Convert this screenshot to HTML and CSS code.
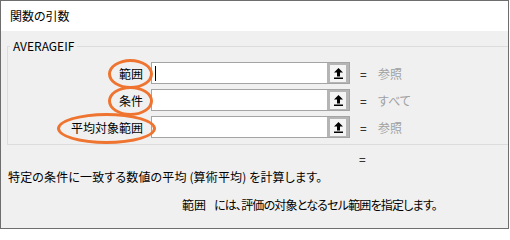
FILE: index.html
```html
<!DOCTYPE html>
<html lang="ja">
<head>
<meta charset="utf-8">
<title>関数の引数</title>
<link rel="stylesheet" href="styles.css">
</head>
<body>
<div class="dialog">
  <div class="titlebar">関数の引数</div>
  <div class="content">
    <fieldset class="group">
      <legend class="group-title">AVERAGEIF</legend>
      <div class="rows">
        <div class="row">
          <div class="label-cell"><span class="label mark mark-short">範囲</span></div>
          <div class="field">
            <div class="field-input"><span class="caret"></span></div>
            <div class="field-btn"><span class="btn-face"><svg class="ref-icon" width="9" height="11" viewBox="0 0 9 11"><path d="M4.5 0 L9 4.5 L6 4.5 L6 8.5 L3 8.5 L3 4.5 L0 4.5 Z" fill="#000"/><rect x="0" y="9.5" width="9" height="1.5" fill="#000"/></svg></span></div>
          </div>
          <span class="eq">=</span>
          <span class="value">参照</span>
        </div>
        <div class="row">
          <div class="label-cell"><span class="label mark mark-short">条件</span></div>
          <div class="field">
            <div class="field-input"></div>
            <div class="field-btn"><span class="btn-face"><svg class="ref-icon" width="9" height="11" viewBox="0 0 9 11"><path d="M4.5 0 L9 4.5 L6 4.5 L6 8.5 L3 8.5 L3 4.5 L0 4.5 Z" fill="#000"/><rect x="0" y="9.5" width="9" height="1.5" fill="#000"/></svg></span></div>
          </div>
          <span class="eq">=</span>
          <span class="value">すべて</span>
        </div>
        <div class="row">
          <div class="label-cell"><span class="label mark mark-long">平均対象範囲</span></div>
          <div class="field">
            <div class="field-input"></div>
            <div class="field-btn"><span class="btn-face"><svg class="ref-icon" width="9" height="11" viewBox="0 0 9 11"><path d="M4.5 0 L9 4.5 L6 4.5 L6 8.5 L3 8.5 L3 4.5 L0 4.5 Z" fill="#000"/><rect x="0" y="9.5" width="9" height="1.5" fill="#000"/></svg></span></div>
          </div>
          <span class="eq">=</span>
          <span class="value">参照</span>
        </div>
      </div>
    </fieldset>
    <div class="result"><span class="eq">=</span></div>
    <p class="desc">特定の条件に一致する数値の平均 (算術平均) を計算します。</p>
    <p class="argdesc"><span class="argname">範囲</span><span class="argtext">には、評価の対象となるセル範囲を指定します。</span></p>
  </div>
</div>
</body>
</html>
```
FILE: styles.css
```css
html, body {
  margin: 0;
  padding: 0;
  background: #ffffff;
}

.dialog {
  box-sizing: border-box;
  width: 509px;
  height: 229px;
  border: 1px solid #6e6e6e;
  background: #f0f0f0;
  overflow: hidden;
  font-family: "Noto Sans CJK JP", "Noto Sans", sans-serif;
  font-size: 12px;
  font-feature-settings: "palt";
  color: #000;
}

.titlebar {
  height: 30px;
  line-height: 30px;
  padding-left: 9px;
  background: #ffffff;
}

.content {
  padding-left: 6px;
}

.group {
  margin: 7px -120px 0 0;
  padding: 0 0 6px 0;
  border: 1px solid #dcdcdc;
  min-width: 0;
}

.group-title {
  margin-left: 2px;
  padding: 0 3px;
  line-height: 16px;
}

.rows {
  display: flex;
  flex-direction: column;
  gap: 5px;
  padding-top: 8px;
}

.row {
  display: flex;
  align-items: center;
  height: 22px;
}

.label-cell {
  width: 135px;
  text-align: right;
  margin-right: 8px;
}

.label {
  position: relative;
  line-height: 16px;
}

.mark::before {
  content: "";
  position: absolute;
  border: 3px solid #ee7430;
  border-radius: 50%;
}

.mark-short::before {
  left: -11px;
  right: -10px;
  top: -6px;
  bottom: -7px;
}

.mark-long::before {
  left: -14px;
  right: -13px;
  top: -6px;
  bottom: -8px;
}

.field {
  box-sizing: border-box;
  display: flex;
  width: 199px;
  height: 22px;
  border: 1px solid #a4a4a4;
}

.field-input {
  flex: 1;
  background: #ffffff;
  display: flex;
  align-items: center;
}

.caret {
  width: 1px;
  height: 15px;
  margin-left: 3px;
  background: #000;
}

.field-btn {
  width: 22px;
  background: #b5b5b5;
  display: flex;
  align-items: center;
  justify-content: center;
}

.btn-face {
  width: 16px;
  height: 17px;
  background: #f4f4f4;
  display: flex;
  align-items: center;
  justify-content: center;
}

.ref-icon {
  display: block;
}

.eq {
  margin-left: 10px;
  width: 18px;
}

.value {
  color: #a0a0a0;
}

.result {
  height: 16px;
  line-height: 16px;
  padding-left: 352px;
  margin-top: 6px;
}

.result .eq {
  margin-left: 0;
}

.desc {
  margin: 2px 0 0 1px;
  line-height: 16px;
  letter-spacing: 0.15px;
}

.argdesc {
  margin: 12px 0 0 175px;
  line-height: 16px;
}

.argname {
  margin-right: 8px;
}

.argtext {
  letter-spacing: -0.8px;
}
```
